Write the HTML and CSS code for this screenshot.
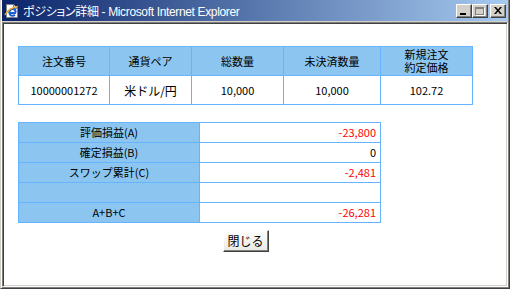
FILE: index.html
```html
<!DOCTYPE html>
<html lang="ja">
<head>
    <meta charset="UTF-8">
    <title>ポジション詳細</title>
    <link rel="stylesheet" href="styles.css">
</head>
<body>
    <div class="window">
        <div class="titlebar">
            <svg class="ie-icon" width="16" height="16" viewBox="0 0 16 16">
                <path d="M2.5 1.5h7l4 4v9h-11z" fill="#fff" stroke="#808080"/>
                <path d="M9.5 1.5v4h4" fill="#e0e0e0" stroke="#808080"/>
                <path d="M12 10H5.5c.2 1.8 1.4 2.8 3 2.8 1 0 1.8-.4 2.4-1" fill="none" stroke="#1c5fd0" stroke-width="2"/>
                <path d="M5.3 9.5c0-2 1.4-3.4 3.2-3.4s3.2 1.4 3.2 3.4" fill="none" stroke="#1c5fd0" stroke-width="2"/>
                <path d="M1 12c2-5 8-8 13-8.5" fill="none" stroke="#e8a820" stroke-width="1.5"/>
            </svg>
            <span class="title-text">ポジション詳細 - Microsoft Internet Explorer</span>
            <div class="title-buttons">
                <span class="tbtn tbtn-min"><i></i></span>
                <span class="tbtn tbtn-max disabled"><i></i></span>
                <span class="tbtn tbtn-close">
                    <svg width="8" height="7" viewBox="0 0 8 7">
                        <path d="M0 0h2l2 2.5L6 0h2L5 3.5 8 7H6L4 4.5 2 7H0l3-3.5z" fill="#000"/>
                    </svg>
                </span>
            </div>
        </div>

        <div class="client">
            <div class="content">
                <table class="order-table">
                    <tr>
                        <th class="c1">注文番号</th>
                        <th class="c2">通貨ペア</th>
                        <th class="c3">総数量</th>
                        <th class="c4">未決済数量</th>
                        <th class="c5 two-line">新規注文<br>約定価格</th>
                    </tr>
                    <tr>
                        <td>10000001272</td>
                        <td class="pair">米ドル/円</td>
                        <td>10,000</td>
                        <td>10,000</td>
                        <td>102.72</td>
                    </tr>
                </table>

                <table class="pl-table">
                    <tr>
                        <th>評価損益(A)</th>
                        <td class="minus">-23,800</td>
                    </tr>
                    <tr>
                        <th>確定損益(B)</th>
                        <td>0</td>
                    </tr>
                    <tr>
                        <th>スワップ累計(C)</th>
                        <td class="minus">-2,481</td>
                    </tr>
                    <tr>
                        <th>&nbsp;</th>
                        <td>&nbsp;</td>
                    </tr>
                    <tr>
                        <th>A+B+C</th>
                        <td class="minus">-26,281</td>
                    </tr>
                </table>

                <div class="actions">
                    <button class="close-btn">閉じる</button>
                </div>
            </div>
        </div>
    </div>
</body>
</html>
```

FILE: styles.css
```css
* {
    box-sizing: border-box;
}

body {
    margin: 0;
    background: #d4d0c8;
    font-family: "Noto Sans CJK JP", sans-serif;
}

.window {
    width: 510px;
    height: 289px;
    display: flex;
    flex-direction: column;
    background: #d4d0c8;
    border-left: 1px solid #d4d0c8;
    border-right: 1px solid #404040;
    border-bottom: 1px solid #404040;
    box-shadow: inset 1px 0 #fff, inset -1px -1px #808080;
    padding: 0 1px 1px 1px;
}

.titlebar {
    height: 21px;
    flex: none;
    display: flex;
    align-items: center;
    padding: 0 2px 0 2px;
    background: linear-gradient(to right, #0a246a, #a6caf0);
    color: #fff;
}

.ie-icon {
    flex: none;
    margin-right: 3px;
}

.title-text {
    font-family: "Liberation Sans", "Noto Sans CJK JP", sans-serif;
    font-size: 12px;
    letter-spacing: -0.35px;
    font-feature-settings: "palt";
    white-space: nowrap;
}

.title-buttons {
    margin-left: auto;
    display: flex;
    align-items: center;
}

.tbtn {
    width: 16px;
    height: 14px;
    background: #d4d0c8;
    border: 1px solid;
    border-color: #fff #404040 #404040 #fff;
    box-shadow: inset -1px -1px #808080;
    display: flex;
    align-items: center;
    justify-content: center;
}

.tbtn-max {
    margin-right: 2px;
}

.tbtn-min i {
    width: 6px;
    height: 2px;
    background: #000;
    margin-top: 6px;
    margin-right: 2px;
}

.tbtn-max i {
    width: 9px;
    height: 8px;
    border: 1px solid #808080;
    border-top-width: 2px;
    box-shadow: 1px 1px #fff;
    margin-right: 1px;
}

.client {
    flex: 1;
    margin-top: 1px;
    background: #fff;
    border: 1px solid;
    border-color: #808080 #fff #fff #808080;
    box-shadow: inset 1px 1px #404040, inset -1px -1px #d4d0c8;
    padding: 23px 0 0 15px;
}

.content {
    width: 455px;
}

table {
    border-collapse: separate;
    border-spacing: 0;
    border-top: 1px solid #66b3ff;
    border-left: 1px solid #66b3ff;
    font-size: 11px;
    color: #000;
}

th, td {
    border-right: 1px solid #66b3ff;
    border-bottom: 1px solid #66b3ff;
    padding: 0;
    font-weight: normal;
    line-height: 13px;
    vertical-align: middle;
}

th {
    background: #8cc6f0;
}

.order-table {
    width: 455px;
}

.order-table th,
.order-table td {
    height: 29px;
    text-align: center;
}

.order-table .two-line {
    font-family: "Liberation Sans", "Noto Sans CJK JP", sans-serif;
    line-height: 13px;
    padding-top: 1px;
}

.order-table .c1 { width: 91px; }
.order-table .c2 { width: 82px; }
.order-table .c3 { width: 92px; }
.order-table .c4 { width: 97px; }
.order-table .c5 { width: 92px; }

.order-table .pair {
    font-size: 12px;
}

.pl-table {
    width: 363px;
    margin-top: 17px;
}

.pl-table th,
.pl-table td {
    height: 20px;
    width: 181px;
}

.pl-table th {
    text-align: center;
}

.pl-table td {
    text-align: right;
    padding-right: 4px;
}

.pl-table .minus {
    color: #ff0000;
}

.actions {
    text-align: center;
    margin-top: 4px;
}

.close-btn {
    width: 46px;
    height: 22px;
    padding: 0;
    font-family: "Noto Sans CJK JP", sans-serif;
    font-size: 12px;
    color: #000;
    background: linear-gradient(#fdfdfc, #ebe9e4);
    border: 1px solid;
    border-color: #fff #404040 #404040 #fff;
    box-shadow: inset -1px -1px #808080;
}
```
